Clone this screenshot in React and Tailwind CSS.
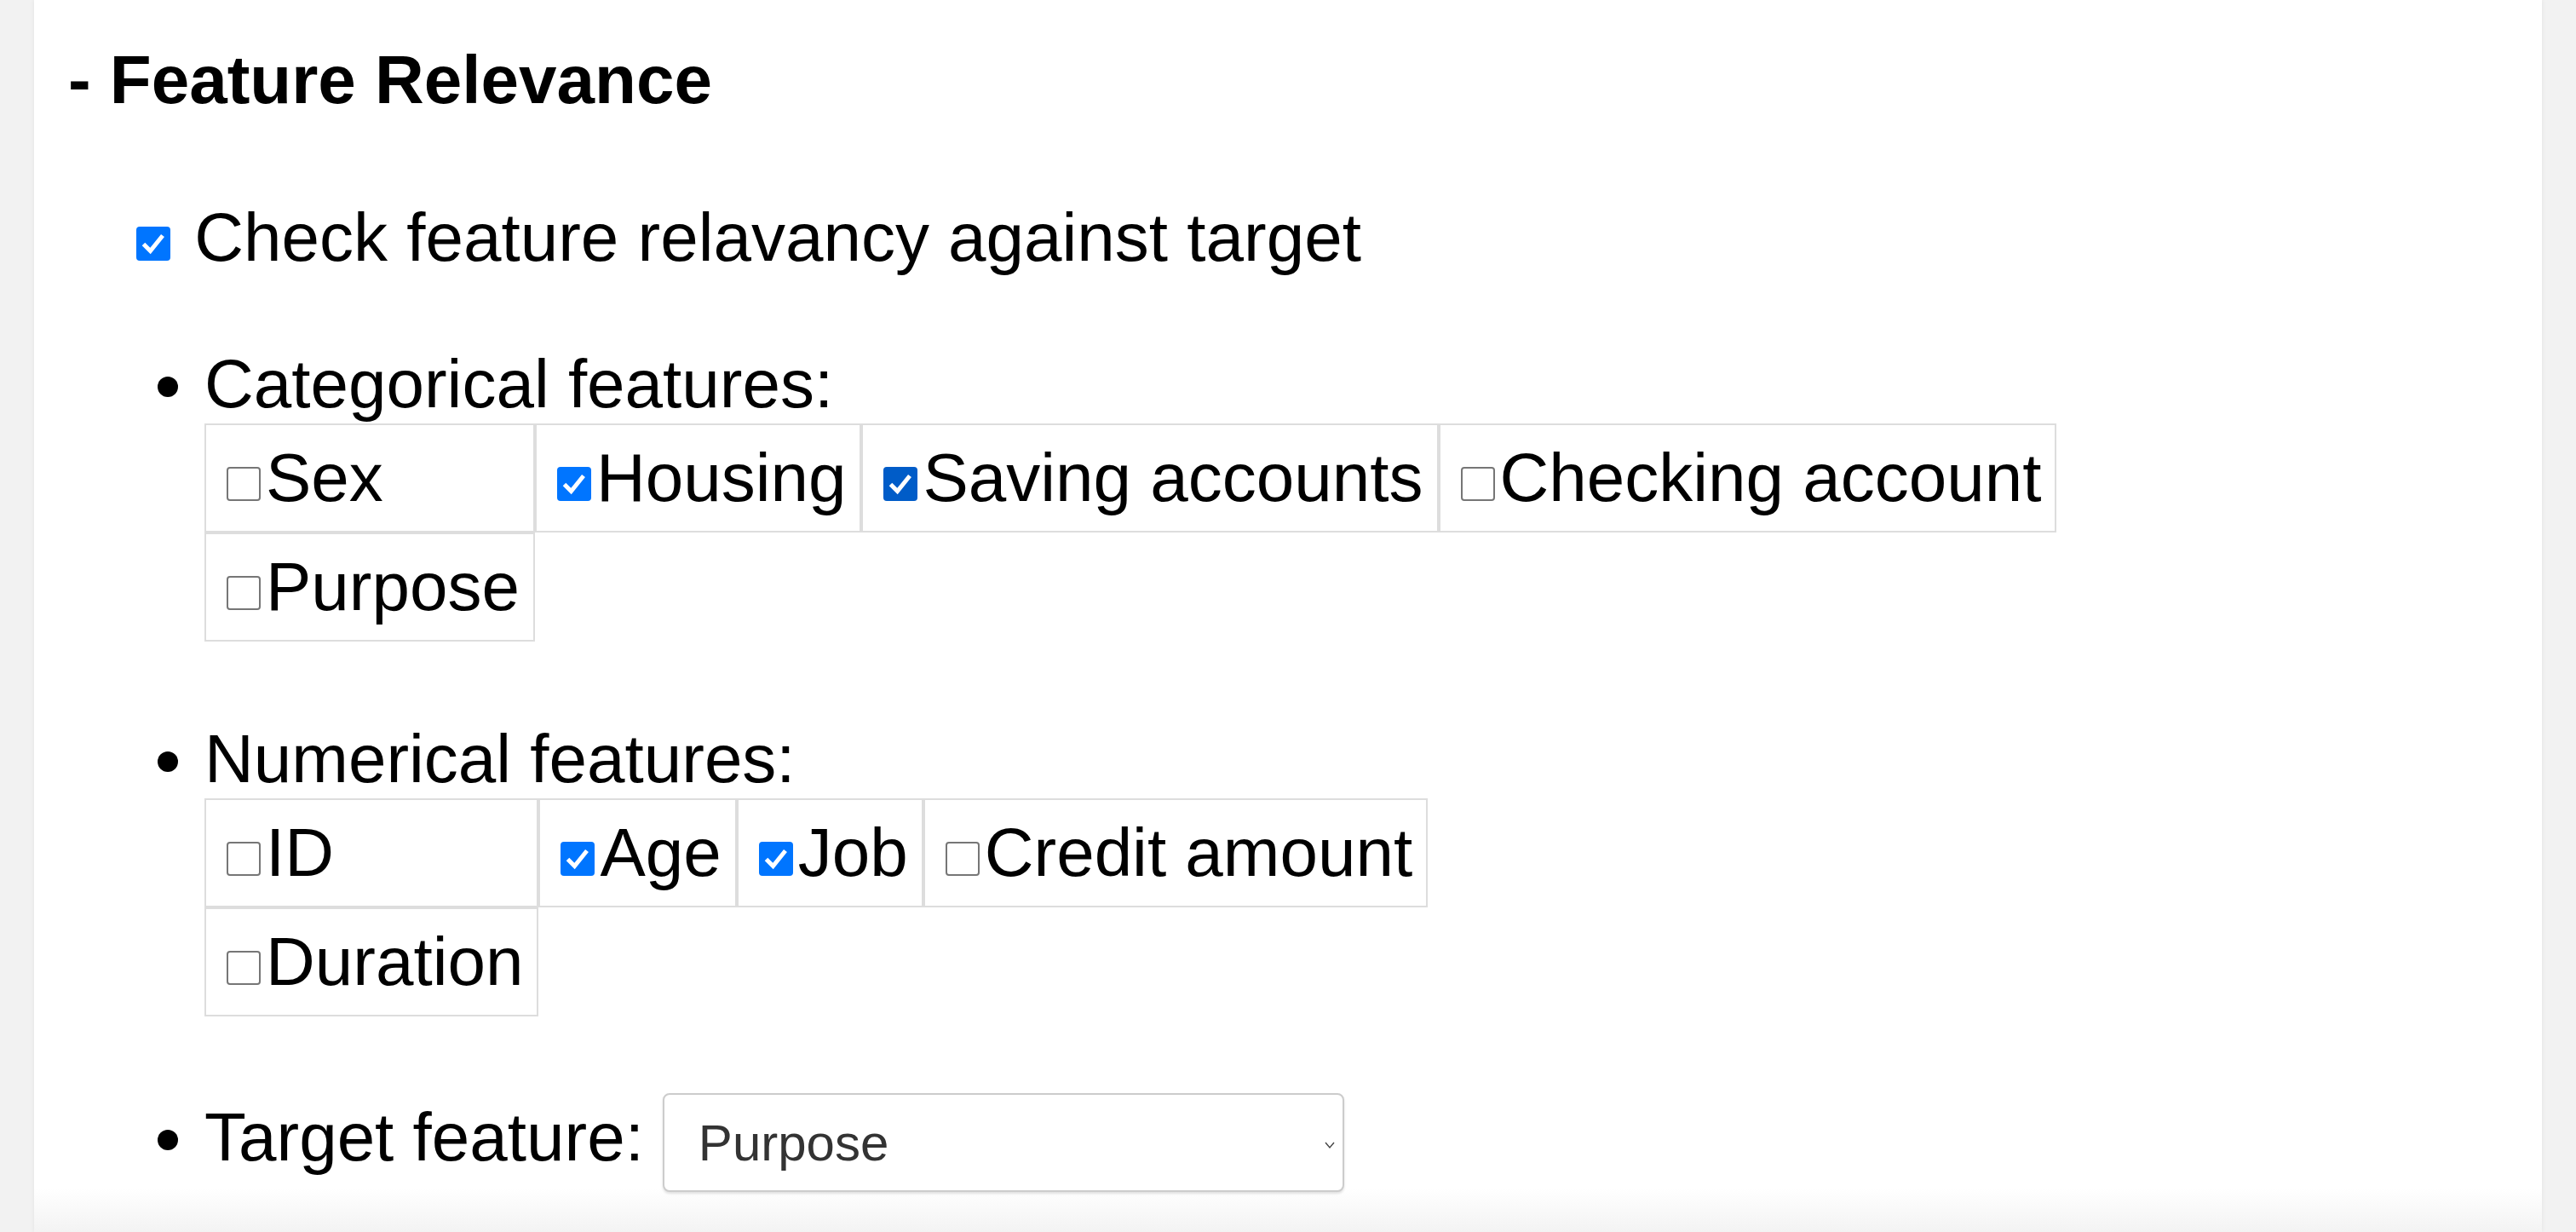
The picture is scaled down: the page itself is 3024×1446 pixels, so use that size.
const categorical = [
  [
    { label: 'Sex', checked: false },
    { label: 'Housing', checked: true },
    { label: 'Saving accounts', checked: true, hover: true },
    { label: 'Checking account', checked: false },
  ],
  [{ label: 'Purpose', checked: false }],
];

const numerical = [
  [
    { label: 'ID', checked: false },
    { label: 'Age', checked: true },
    { label: 'Job', checked: true },
    { label: 'Credit amount', checked: false },
  ],
  [{ label: 'Duration', checked: false }],
];

const Box = ({ checked, hover }) => {
  if (!checked) {
    return (
      <span className="inline-block w-[40px] h-[40px] ml-[8px] mr-[6px] align-baseline rounded-[4px] border-2 border-[#767676] bg-white"></span>
    );
  }
  return (
    <span
      className={
        'inline-block w-[40px] h-[40px] ml-[8px] mr-[6px] align-baseline rounded-[4px] ' +
        (hover ? 'bg-[#005cc8]' : 'bg-[#0075ff]')
      }
    >
      <svg className="block" width="40" height="40" viewBox="0 0 40 40">
        <polyline points="8.5,20.5 16.5,28.5 31,10.5" fill="none" stroke="white" strokeWidth="5" />
      </svg>
    </span>
  );
};

const FeatureTable = ({ rows }) => (
  <table className="border-separate border-spacing-0">
    <tbody>
      {rows.map((row, i) => (
        <tr key={i}>
          {row.map(cell => (
            <td key={cell.label} className="border-2 border-[#dddddd] p-4 whitespace-nowrap">
              <Box checked={cell.checked} hover={cell.hover} />
              {cell.label}
            </td>
          ))}
        </tr>
      ))}
    </tbody>
  </table>
);

export default function App() {
  return (
    <div
      className="min-h-screen bg-[#f2f2f2] px-[40px] text-black text-[80px] leading-[92px]"
      style={{ fontFamily: '"Liberation Sans", Arial, sans-serif' }}
    >
      <div className="min-h-[1446px] bg-white bg-[linear-gradient(to_bottom,#ffffff_1395px,#f3f3f3_1446px)] shadow-[0_0_6px_rgba(0,0,0,0.07)] pl-[36px] pt-[48px]">
        <h2 className="font-bold ml-[4px]">- Feature Relevance</h2>

        <div className="mt-[93px] ml-[76px]">
          <Box checked />
          {' '}Check feature relavancy against target
        </div>

        <ul className="list-disc pl-[164px] mt-[80px]">
          <li className="mb-[92px]">
            Categorical features:
            <FeatureTable rows={categorical} />
          </li>
          <li className="mb-[90px]">
            Numerical features:
            <FeatureTable rows={numerical} />
          </li>
          <li>
            Target feature:
            <div className="inline-flex items-center justify-between align-baseline ml-[22px] w-[800px] h-[116px] pl-[40px] pr-[9px] bg-white border-2 border-[#cccccc] rounded-[8px] shadow-[0_2px_3px_rgba(0,0,0,0.12)] text-[60px] text-[#333333]">
              <span className="leading-[69px]">Purpose</span>
              <svg className="mt-[6px]" width="12" height="10" viewBox="0 0 12 10">
                <polyline points="1,2 6,8 11,2" fill="none" stroke="#444" strokeWidth="1.4" />
              </svg>
            </div>
          </li>
        </ul>
      </div>
    </div>
  );
}
